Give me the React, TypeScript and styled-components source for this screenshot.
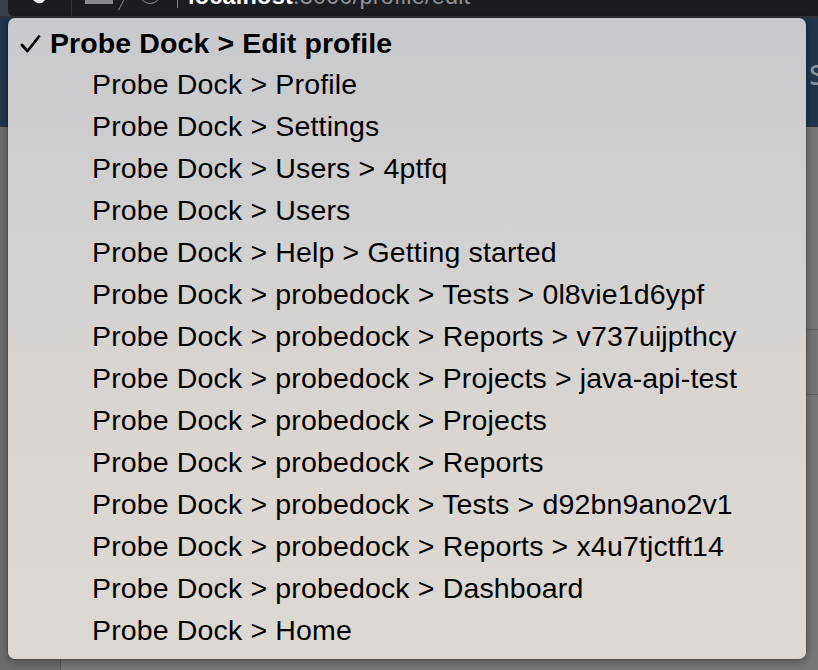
import React from "react";
import styled, { createGlobalStyle } from "styled-components";

const Global = createGlobalStyle`
  html, body { margin: 0; padding: 0; }
  body { background: #6f6f6f; font-family: "Liberation Sans", Arial, Helvetica, sans-serif; }
`;

const Page = styled.div`
  position: relative;
  width: 818px;
  height: 670px;
  overflow: hidden;
  display: flex;
  flex-direction: column;
  background: #6f6f6f;
`;

const ChromeBar = styled.div`
  height: 16px;
  display: flex;
  background: #3b4048;
  border-bottom: 2px solid #2f343a;
`;

const ChromeInner = styled.div`
  flex: 1;
  margin-left: 8px;
  background: #1b1d21;
  border-bottom-left-radius: 5px;
  position: relative;
  display: flex;
  align-items: flex-start;
  overflow: hidden;
`;

const BackArrow = styled.div`
  margin-left: 27px;
  margin-top: -8px;
  width: 10px;
  height: 12px;
  background: #f2f2f2;
  border-radius: 0 0 6px 2px;
  transform: rotate(40deg);
`;

const Divider = styled.div<{ $h: number; $ml: number; $c?: string }>`
  margin-left: ${(p) => p.$ml}px;
  width: 1px;
  height: ${(p) => p.$h}px;
  background: ${(p) => p.$c || "#33373d"};
`;

const GreyBlock = styled.div`
  margin-left: 13px;
  width: 28px;
  height: 4px;
  background: #8a8c90;
`;

const Slash = styled.div`
  margin-left: 8px;
  width: 1px;
  height: 13px;
  margin-top: -2px;
  background: #7c7f84;
  transform: rotate(28deg);
`;

const Circle = styled.div`
  margin-left: 17px;
  margin-top: -18px;
  width: 20px;
  height: 20px;
  border: 1.5px solid #8a8c90;
  border-radius: 50%;
`;

const Url = styled.div`
  margin-left: 10px;
  margin-top: -13px;
  font-size: 23.5px;
  line-height: 18px;
  color: #8e9196;
  white-space: nowrap;
  letter-spacing: 0.2px;
`;

const Host = styled.span`
  color: #ffffff;
  font-weight: bold;
`;

const NavBar = styled.div`
  height: 109px;
  background: #22354c;
  display: flex;
  justify-content: flex-end;
  align-items: center;
`;

const NavText = styled.div`
  font-family: "Open Sans", "Liberation Sans", sans-serif;
  font-size: 36px;
  line-height: 40px;
  color: #8b929b;
  margin-right: -8px;
  margin-top: -2px;
`;

const Main = styled.div`
  flex: 1;
  display: flex;
`;

const Sidebar = styled.div`
  width: 60px;
  border-right: 1px solid #555555;
  background: #6c6c6c;
`;

const Content = styled.div`
  flex: 1;
  padding-top: 202px;
  background: #767676;
`;

const Card = styled.div`
  height: 64px;
  border-top: 1px solid #5e5e5e;
  border-bottom: 1px solid #5e5e5e;
  background: #737373;
`;

const Menu = styled.div`
  position: absolute;
  left: 8px;
  top: 18px;
  width: 798px;
  height: 641px;
  box-sizing: border-box;
  padding: 4px 0 8px 0;
  border-radius: 7px;
  background: linear-gradient(180deg, #c8c9cd 0%, #d2d1d1 35%, #dbd6d1 70%, #dcd8d3 100%);
  box-shadow: 0 2px 8px rgba(0, 0, 0, 0.35), 0 0 0 0.5px rgba(0, 0, 0, 0.25);
  display: flex;
  flex-direction: column;
`;

const Item = styled.div<{ $current?: boolean }>`
  height: 42px;
  box-sizing: border-box;
  flex: none;
  display: flex;
  align-items: center;
  padding-left: ${(p) => (p.$current ? 12 : 84)}px;
  padding-bottom: ${(p) => (p.$current ? 0 : 2)}px;
  font-size: 28.5px;
  font-weight: ${(p) => (p.$current ? "bold" : "normal")};
  color: #000;
  white-space: nowrap;
  letter-spacing: ${(p) => (p.$current ? 0.1 : 0.15)}px;
`;

const Check = styled.svg`
  width: 21px;
  height: 18px;
  margin-right: 9px;
  margin-top: 2px;
  flex: none;
`;

const items = [
  "Probe Dock > Profile",
  "Probe Dock > Settings",
  "Probe Dock > Users > 4ptfq",
  "Probe Dock > Users",
  "Probe Dock > Help > Getting started",
  "Probe Dock > probedock > Tests > 0l8vie1d6ypf",
  "Probe Dock > probedock > Reports > v737uijpthcy",
  "Probe Dock > probedock > Projects > java-api-test",
  "Probe Dock > probedock > Projects",
  "Probe Dock > probedock > Reports",
  "Probe Dock > probedock > Tests > d92bn9ano2v1",
  "Probe Dock > probedock > Reports > x4u7tjctft14",
  "Probe Dock > probedock > Dashboard",
  "Probe Dock > Home",
];

export default function App() {
  return (
    <>
      <Global />
      <Page>
        <ChromeBar>
          <ChromeInner>
            <BackArrow />
            <Divider $h={16} $ml={26} />
            <GreyBlock />
            <Slash />
            <Circle />
            <Divider $h={8} $ml={16} $c="#7c7f84" />
            <Url>
              <Host>localhost</Host>:3000/profile/edit
            </Url>
          </ChromeInner>
        </ChromeBar>
        <NavBar>
          <NavText>s</NavText>
        </NavBar>
        <Main>
          <Sidebar />
          <Content>
            <Card />
          </Content>
        </Main>
        <Menu>
          <Item $current>
            <Check viewBox="0 0 21 18">
              <path d="M2 10 L7.5 16 L19 1.5" fill="none" stroke="#000" strokeWidth="2.8" strokeLinecap="round" strokeLinejoin="round" />
            </Check>
            Probe Dock &gt; Edit profile
          </Item>
          {items.map((t) => (
            <Item key={t}>{t}</Item>
          ))}
        </Menu>
      </Page>
    </>
  );
}
